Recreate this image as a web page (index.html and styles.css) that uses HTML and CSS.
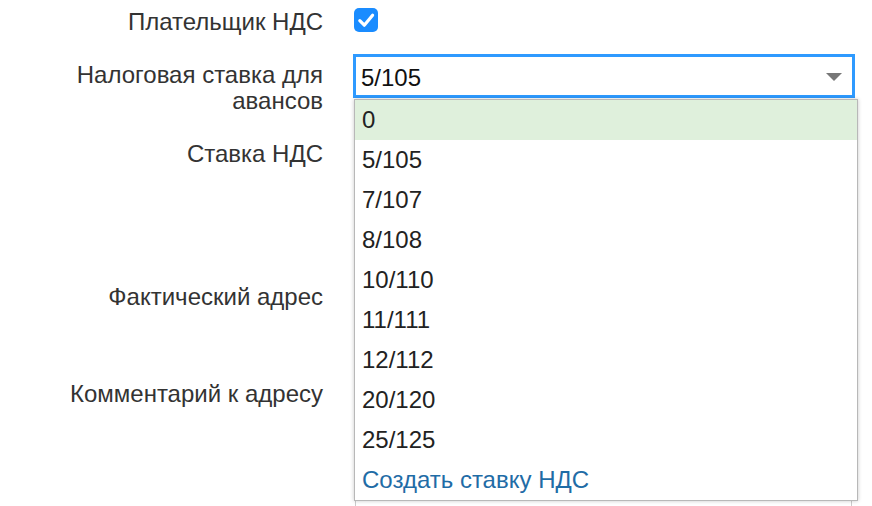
FILE: index.html
```html
<!DOCTYPE html>
<html lang="ru">
<head>
<meta charset="utf-8">
<title>Налоговые настройки</title>
<link rel="stylesheet" href="styles.css">
</head>
<body>
<form class="form">
  <div class="row row-payer">
    <div class="label label-payer">Плательщик НДС</div>
    <div class="field">
      <span class="checkbox">
        <svg width="24" height="24" viewBox="0 0 24 24"><path d="M5.8 12.6 L10.3 17.2 L18.6 7.2" fill="none" stroke="#fff" stroke-width="3.2" stroke-linecap="round" stroke-linejoin="round"/></svg>
      </span>
    </div>
  </div>

  <div class="row row-advance">
    <div class="label">Налоговая ставка для<br>авансов</div>
    <div class="field">
      <div class="select-wrap">
        <div class="select select-focus">
          <span class="select-value">5/105</span>
          <span class="arrow"></span>
        </div>
        <ul class="dropdown">
          <li class="option option-active">0</li>
          <li class="option">5/105</li>
          <li class="option">7/107</li>
          <li class="option">8/108</li>
          <li class="option">10/110</li>
          <li class="option">11/111</li>
          <li class="option">12/112</li>
          <li class="option">20/120</li>
          <li class="option">25/125</li>
          <li class="option option-link">Создать ставку НДС</li>
        </ul>
      </div>
    </div>
  </div>

  <div class="row row-rate">
    <div class="label">Ставка НДС</div>
    <div class="field">
      <div class="select">
        <span class="select-value"></span>
        <span class="arrow"></span>
      </div>
    </div>
  </div>

  <div class="row row-address">
    <div class="label">Фактический адрес</div>
    <div class="field">
      <div class="textarea textarea-address"></div>
    </div>
  </div>

  <div class="row row-comment">
    <div class="label">Комментарий к адресу</div>
    <div class="field">
      <div class="textarea textarea-comment"></div>
    </div>
  </div>
</form>
</body>
</html>
```

FILE: styles.css
```css
html, body {
  margin: 0;
  padding: 0;
  background: #fff;
}

body {
  width: 872px;
  height: 506px;
  overflow: hidden;
  font-family: "Liberation Sans", Arial, Helvetica, sans-serif;
  font-size: 24px;
  color: #333;
}

.form {
  display: flex;
  flex-direction: column;
}

.row {
  display: grid;
  grid-template-columns: 323px 498px;
  column-gap: 32px;
  align-items: start;
}

.row-payer   { height: 56px; }
.row-advance { height: 79px; }
.row-rate    { height: 143px; }
.row-address { height: 97px; }
.row-comment { height: 131px; }

.label {
  text-align: right;
  line-height: 26px;
  padding-top: 6px;
  color: #333;
}

.label-payer {
  padding-top: 9px;
}

.field {
  position: relative;
}

.checkbox {
  display: flex;
  align-items: center;
  justify-content: center;
  width: 24px;
  height: 24px;
  margin-top: 8px;
  margin-left: -1px;
  border-radius: 5px;
  background: #1a8cff;
}

.select-wrap {
  position: relative;
}

.select {
  box-sizing: border-box;
  height: 40px;
  border: 1px solid #ccc;
  background: #fff;
  display: flex;
  align-items: center;
  justify-content: space-between;
  padding: 4px 10px 0 5px;
}

.select-focus {
  border-color: #2e9aff;
  box-shadow: 0 0 0 2px #2e9aff;
}

.select-value {
  color: #111;
  line-height: 32px;
}

.arrow {
  width: 0;
  height: 0;
  border-left: 8px solid transparent;
  border-right: 8px solid transparent;
  border-top: 8px solid #777;
  margin-top: -2px;
}

.dropdown {
  position: absolute;
  z-index: 5;
  top: 43px;
  left: -1px;
  width: 504px;
  box-sizing: border-box;
  margin: 0;
  padding: 0;
  list-style: none;
  background: #fff;
  border: 1px solid #b8b8b8;
  box-shadow: 0 0 4px rgba(0, 0, 0, 0.22);
}

.option {
  height: 40px;
  line-height: 40px;
  padding-left: 7px;
  color: #222;
}

.option-active {
  background: #dff0dc;
}

.option-link {
  color: #1f6ca6;
}

.textarea {
  box-sizing: border-box;
  border: 1px solid #ccc;
  border-bottom: none;
  background: #fff;
}

.textarea-address {
  height: 86px;
}

.textarea-comment {
  height: 131px;
  margin-right: 1px;
}
```
